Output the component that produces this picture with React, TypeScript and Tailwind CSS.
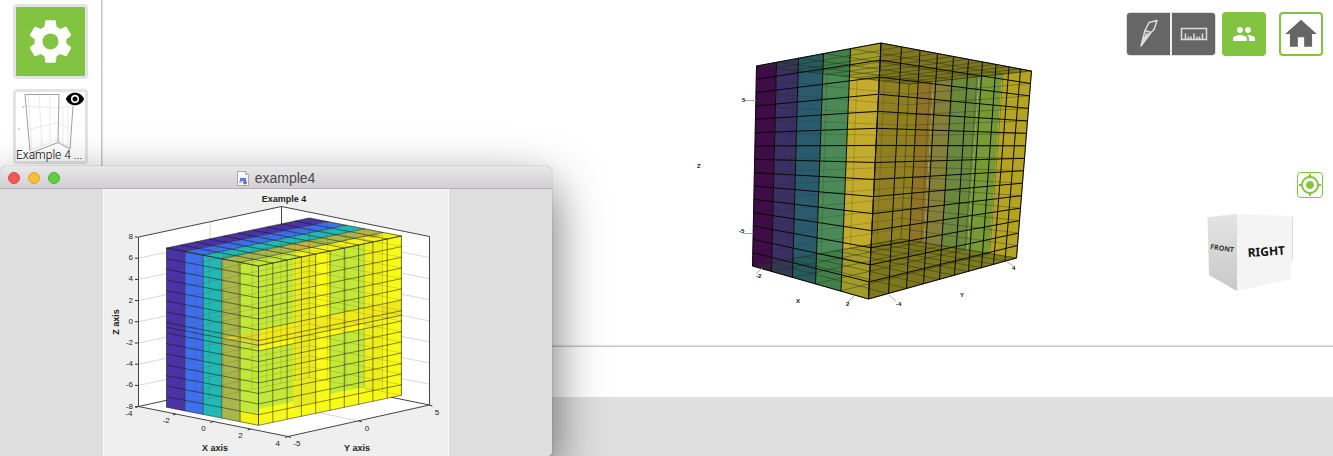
import React from "react";
import { MdGroup, MdHome, MdMyLocation, MdSettings, MdVisibility } from "react-icons/md";

type Point = [number, number];
type Corner = [number, number, number];

const at = (a: Point, b: Point, t: number): Point => [a[0] + (b[0] - a[0]) * t, a[1] + (b[1] - a[1]) * t];

const between = (a: Corner, b: Corner, t: number): Point => {
  const wa = (1 - t) * a[2];
  const wb = t * b[2];
  return [(a[0] * wa + b[0] * wb) / (wa + wb), (a[1] * wa + b[1] * wb) / (wa + wb)];
};

const segment = (a: Point, b: Point) =>
  `M${a[0].toFixed(1)} ${a[1].toFixed(1)}L${b[0].toFixed(1)} ${b[1].toFixed(1)}`;

const quad = (...points: Point[]) => points.map((p) => p.join(",")).join(" ");

/** Lines over a face given by its top and bottom edges. */
function faceGrid(t0: Corner, t1: Corner, b0: Corner, b1: Corner, columns: number, rows: number) {
  let d = "";
  for (let i = 0; i <= columns; i++) d += segment(between(t0, t1, i / columns), between(b0, b1, i / columns));
  for (let j = 0; j <= rows; j++) {
    d += segment(at([t0[0], t0[1]], [b0[0], b0[1]], j / rows), at([t1[0], t1[1]], [b1[0], b1[1]], j / rows));
  }
  return d;
}

function crossGrid(n: Corner, l: Corner, r: Corner, b: Corner) {
  let d = "";
  for (let i = 0; i <= 5; i++) d += segment(between(n, l, i / 5), between(r, b, i / 5));
  for (let i = 0; i <= 10; i++) d += segment(between(n, r, i / 10), between(l, b, i / 10));
  return d;
}

const nearTop: Corner = [881, 43, 3.906];
const leftTop: Corner = [756.5, 66, 5];
const rightTop: Corner = [1031.5, 71, 5.348];
const backTop: Corner = [909, 84, 6.442];
const nearBottom: Corner = [868.5, 299, 3.906];
const leftBottom: Corner = [752.5, 266, 5];
const rightBottom: Corner = [1016.5, 258, 5.348];
const backBottom: Corner = [901, 239, 6.442];

const leftStrips = ["#3f0c47", "#3b3063", "#2a5b6d", "#4b8a56", "#c3ab2c"];
const leftTops = [756.5, 776.5, 798.5, 823.5, 850.5, 881].map((x) => (x - 756.5) / 124.5);
const leftBottoms = [752.5, 771.5, 792.5, 815.5, 841, 868.5].map((x) => (x - 752.5) / 116);
const leftEdge = (i: number): [Point, Point] => [
  at([756.5, 66], [881, 43], leftTops[i]),
  at([752.5, 266], [868.5, 299], leftBottoms[i]),
];

const rightBands: [number, number, string][] = [
  [881, 920, "#908022"],
  [920, 935, "#8f7428"],
  [935, 954, "#84803a"],
  [954, 980, "#6a893d"],
  [980, 1003, "#769a36"],
  [1003, 1031.5, "#b4a421"],
];

const rightTops = [881, 901.5, 920, 937.5, 953.5, 968.5, 982.5, 996, 1009, 1020.5, 1031.5];
const rightBottoms = [868.5, 888.5, 906.5, 923.5, 939.5, 954.5, 968.5, 981.5, 993.5, 1005, 1016.5];

function nearGrid() {
  let d = "";
  for (let i = 0; i <= 5; i++) d += segment(...leftEdge(i));
  rightTops.forEach((x, i) => {
    d += segment(
      at([881, 43], [1031.5, 71], (x - 881) / 150.5),
      at([868.5, 299], [1016.5, 258], (rightBottoms[i] - 868.5) / 148),
    );
  });
  for (let j = 0; j <= 15; j++) {
    const l = at([756.5, 66], [752.5, 266], j / 15);
    const n = at([881, 43], [868.5, 299], j / 15);
    const r = at([1031.5, 71], [1016.5, 258], j / 15);
    d += segment(l, n) + segment(n, r);
  }
  return d;
}

function Scene() {
  const rightAt = (x: number): [Point, Point] => {
    const t = (x - 881) / 150.5;
    return [at([881, 43], [1031.5, 71], t), at([868.5, 299], [1016.5, 258], t)];
  };
  return (
    <svg viewBox="695 0 344 346" className="h-[346px] w-[344px]" role="img" aria-label="3D plot">
      {leftStrips.map((fill, i) => {
        const [a, d] = leftEdge(i);
        const [b, c] = leftEdge(i + 1);
        return <polygon key={fill} points={quad(a, b, c, d)} fill={fill} />;
      })}
      {rightBands.map(([x0, x1, fill]) => {
        const [a, d] = rightAt(x0);
        const [b, c] = rightAt(x1);
        return <polygon key={fill} points={quad(a, b, c, d)} fill={fill} />;
      })}
      <polygon points="756,66 881,43 879,80" fill="#1c5a1e" fillOpacity=".2" />
      <polygon points="881,43 1031,71 909,84 879,80" fill="#7f751f" fillOpacity=".92" />
      <polygon points="752,266 871,244 868,299" fill="#1c5a1e" fillOpacity=".2" />
      <polygon points="871,244 901,239 1016,258 868,299" fill="#7b751c" fillOpacity=".88" />
      <g fill="none" stroke="#1f2a10">
        <path d={faceGrid(leftTop, backTop, leftBottom, backBottom, 5, 15)} strokeOpacity=".2" />
        <path d={faceGrid(backTop, rightTop, backBottom, rightBottom, 5, 15)} strokeOpacity=".34" />
        <path d={crossGrid(nearTop, leftTop, rightTop, backTop)} strokeOpacity=".4" />
        <path d={crossGrid(nearBottom, leftBottom, rightBottom, backBottom)} strokeOpacity=".4" />
      </g>
      <path d={nearGrid()} fill="none" stroke="#080808" />
      <path d="M745 100.5h11M743 233.5h10M756 274l6-6M848 302l6-6M889 295l7 6M1006 261l7 5" stroke="#aaa" fill="none" />
      <g className="font-['Liberation_Sans'] text-[6px] font-bold" fill="#111">
        <text x="697" y="168">Z</text>
        <text x="742" y="102">5</text>
        <text x="739" y="233">-5</text>
        <text x="756" y="278">-2</text>
        <text x="796" y="303">X</text>
        <text x="846" y="306">2</text>
        <text x="896" y="306">-4</text>
        <text x="960" y="297">Y</text>
        <text x="1012" y="270">4</text>
      </g>
    </svg>
  );
}

const levels = [0, 10.6, 21.3, 32, 42.6, 53, 64, 74.7, 79.3, 85, 95.6, 106, 117, 127.5, 138, 148.7, 159.3];
const figureStrips = ["#4a32a9", "#3e70ee", "#22b8b5", "#a7b74b", "#c2e93a"];
const slope = 30 / 143;

/** Patch of the right face between two x positions and two heights below the top edge. */
const facePatch = (x0: number, x1: number, top: number, bottom: number) => {
  const y = (x: number) => 266 - (x - 258.5) * slope;
  return quad([x0, y(x0) + top], [x1, y(x1) + top], [x1, y(x1) + bottom], [x0, y(x0) + bottom]);
};

function Figure() {
  let front = "";
  let ghost = "";
  for (const h of levels) {
    front += `M166.5 ${248 + h}L258.5 ${266 + h}L401.5 ${236 + h}`;
    ghost += `M166.5 ${248 + h}L309 ${218 + h}L401.5 ${236 + h}`;
  }
  for (let i = 0; i <= 10; i++) {
    const x = 258.5 + i * 14.3;
    const y = 266 - i * 3;
    front += `M${x} ${y}v159.3M${x} ${y}l-92 -18`;
    ghost += `M${166.5 + i * 14.3} ${248 - i * 3}v159.3`;
  }
  for (let i = 0; i <= 5; i++) {
    front += `M${166.5 + i * 18.4} ${248 + i * 3.6}v159.3`;
    front += `M${166.5 + i * 18.4} ${248 + i * 3.6}l143 -30`;
    ghost += `M${309 + i * 18.4} ${218 + i * 3.6}v159.3`;
  }
  return (
    <svg viewBox="104 189 344 267" className="h-[267px] w-[344px] bg-[#efefef]" role="img" aria-label="Example 4 figure">
      <path d="M138.5 237L281.5 206.5L429.5 236.5V405L288 436.5L138.5 406.5Z" fill="#fff" />
      <g stroke="#d8d8d8" fill="none">
        {[1, 2, 3, 4, 5, 6, 7].map((i) => (
          <path key={i} d={`M138.5 ${237 + i * 21.2}L281.5 ${206.5 + i * 21.2}L429.5 ${236.5 + i * 21.1}`} />
        ))}
        <path d="M210 222v169L360 421M355 221v169L213 421" />
      </g>
      <path d="M138.5 406.5V237L281.5 206.5L429.5 236.5V405L288 436.5L138.5 406.5L281.5 375L429.5 405M281.5 206.5V375" fill="none" stroke="#444" />
      {figureStrips.map((fill, i) => {
        const x = 166.5 + i * 18.4;
        const y = 248 + i * 3.6;
        return (
          <g key={fill} fill={fill}>
            <path d={`M${x} ${y}l18.4 3.6v159.3l-18.4 -3.6z`} />
            <path d={`M${x} ${y}l143 -30l18.4 3.6l-143 30z`} />
          </g>
        );
      })}
      <path d="M293 252l91 -19l17.5 3l-143 30l35 -7z" fill="#f3f318" />
      <path d="M276 258l18 -4l14 4l-14 3z" fill="#c2e93a" />
      <path d="M293 251l24 -5l-8 -4l-22 5z" fill="#c9b13a" />
      <path d="M365 232l18 3l-10 3l-18 -3z" fill="#c9b13a" />
      <polygon points={facePatch(258.5, 401.5, 0, 159.3)} fill="#fafa18" />
      <polygon points={facePatch(293, 316, 0, 148)} fill="#e9ea20" />
      <polygon points={facePatch(365, 383, 0, 148)} fill="#eeee1e" />
      <polygon points={facePatch(258.5, 293, 0, 64)} fill="#c2e93a" />
      <polygon points={facePatch(258.5, 293, 85, 143)} fill="#c2e93a" />
      <polygon points={facePatch(330, 365, 0, 64)} fill="#c2e93a" />
      <polygon points={facePatch(330, 365, 85, 143)} fill="#c2e93a" />
      <polygon points={facePatch(258.5, 401.5, 64, 80)} fill="#f0ea1c" />
      <path d="M222 338l18.5 -3l18 -4v14l-18.500 -3z" fill="#e3d42c" fillOpacity=".8" />
      <path d="M240.500 410l18 3.500v12l-18 -3.500z" fill="#f3f318" />
      <path d={ghost} fill="none" stroke="#5c4a10" strokeOpacity=".24" strokeWidth=".8" />
      <path d={front} fill="none" stroke="#111" strokeOpacity=".55" strokeWidth=".9" />
      <g className="font-['Liberation_Sans'] text-[8px]" fill="#222">
        {[8, 6, 4, 2, 0, -2, -4, -6, -8].map((v, i) => (
          <g key={v}>
            <text x="133" y={239 + i * 21.2} textAnchor="end">{v}</text>
            <path d={`M135 ${237 + i * 21.2}h3`} stroke="#333" />
          </g>
        ))}
        {[-4, -2, 0, 2, 4].map((v, i) => (
          <g key={v}>
            <text x={129 + i * 37.2} y={416 + i * 7.4} textAnchor="middle">{v}</text>
            <path d={`M${138.5 + i * 37.4} ${406.5 + i * 7.5}l-3 1`} stroke="#333" />
          </g>
        ))}
        {[-5, 0, 5].map((v, i) => (
          <g key={v}>
            <text x={297 + i * 70} y={446 - i * 15.5} textAnchor="middle">{v}</text>
            <path d={`M${288 + i * 70.7} ${436.5 - i * 15.7}l3 1`} stroke="#333" />
          </g>
        ))}
      </g>
      <g className="font-['Liberation_Sans'] text-[9px] font-bold" fill="#222" textAnchor="middle">
        <text x="284" y="202">Example 4</text>
        <text x="215" y="451">X axis</text>
        <text x="357" y="451">Y axis</text>
        <text x="119" y="322" transform="rotate(-90 119 322)">Z axis</text>
      </g>
    </svg>
  );
}

function ViewCube() {
  return (
    <svg viewBox="1205 210 90 84" className="h-[84px] w-[90px]" role="img" aria-label="View cube">
      <defs>
        <linearGradient id="cubeSide" x1="0" y1="0" x2="0" y2="1">
          <stop offset="0" stopColor="#e4e4e4" />
          <stop offset="1" stopColor="#c8c8c8" />
        </linearGradient>
      </defs>
      <path d="M1207.500 217L1237 214V291L1209 275Z" fill="url(#cubeSide)" />
      <path d="M1237 214L1293 216L1291 279L1237 291Z" fill="#f4f4f4" />
      <path d="M1292.500 217v44" stroke="#ddd" />
      <g fontWeight="bold" fill="#111">
        <text x="1210" y="249" fontSize="7" fill="#333" className="font-['Open_Sans']" transform="rotate(8 1210 249)">FRONT</text>
        <text x="1248" y="257" fontSize="12" className="font-['Noto_Sans']" transform="rotate(-4 1248 257)">RIGHT</text>
      </g>
    </svg>
  );
}

function Sidebar() {
  return (
    <aside className="flex w-[102px] shrink-0 flex-col items-center gap-2.5 border-r border-[#c4c4c4] bg-white pt-1 shadow-[1px_0_1px_#e4e4e4]">
      <button aria-label="Settings" className="flex size-[75px] items-center justify-center rounded border-[3px] border-[#e4e4e4] bg-[#82c341] text-white">
        <MdSettings size={53} />
      </button>
      <button aria-label="Example 4" className="relative flex size-[75px] items-end rounded border-[3px] border-[#e4e4e4] bg-white">
        <svg viewBox="0 0 69 69" className="absolute inset-0" fill="none" aria-hidden="true">
          <path d="M12 3l4 54M23 3l3 51M34 3v48M8 14l33 2 14-2M10 38l31-7 13 5M15 58l26-10 14 8M47 14v38M52 15v38" stroke="#ebebeb" />
          <path d="M9 2.500H43L42 50.500M9 2.500L14 59M42 50.500L15 61M42 50.500L54 57M57 14L54 57" stroke="#888" strokeWidth=".8" />
          <path d="M7 14v2M3 36v2" stroke="#aaa" />
        </svg>
        <MdVisibility size={20} className="absolute -top-[3px] right-0 text-black" />
        <span className="relative text-left font-['Roboto'] text-xs leading-3 font-light whitespace-nowrap text-black">Example 4 ...</span>
      </button>
    </aside>
  );
}

function Controls() {
  return (
    <div className="flex w-[207px] shrink-0 flex-col items-end pt-3 pr-2.5">
      <div className="flex w-full items-center">
        <div className="flex gap-0.5 overflow-hidden rounded border border-[#ddd] bg-[#eee]">
          <button aria-label="Slice" className="flex h-[42px] w-[43px] items-center justify-center bg-[#666]">
            <svg viewBox="0 0 24 30" className="h-[30px] w-6" fill="none" stroke="#ddd" strokeWidth="1.500" strokeLinejoin="round" aria-hidden="true">
              <path d="M12 3.500l8-2-3 9-3 3-6-2zM8 11.500L4 27l10-13.500M8 11.500l6 2M10 14L4 27M12 14.500L4 27" />
            </svg>
          </button>
          <button aria-label="Measure" className="flex h-[42px] w-[43px] items-center justify-center bg-[#666]">
            <svg viewBox="0 0 28 14" className="h-3.5 w-7" fill="none" stroke="#ddd" strokeWidth="1.500" aria-hidden="true">
              <path d="M1.500 1.500h25v11h-25zM5.500 12V6.500M8.500 12V9.500M11 12V9.500M14 12V6.500M17 12V9.500M19.500 12V9.500M22.500 12V6.500" />
            </svg>
          </button>
        </div>
        <button aria-label="Users" className="ml-1.5 flex size-11 items-center justify-center rounded-sm bg-[#82c341] text-white">
          <MdGroup size={24} />
        </button>
        <button aria-label="Home" className="ml-auto flex size-11 items-center justify-center rounded-sm border-2 border-[#82c341] bg-white text-[#666]">
          <MdHome size={38} className="shrink-0" />
        </button>
      </div>
      <button aria-label="Center view" className="mt-[116px] flex size-[26px] items-center justify-center rounded border border-[#82c341] bg-white text-[#82c341]">
        <MdMyLocation size={24} className="shrink-0" />
      </button>
      <div className="mt-3 mr-7">
        <ViewCube />
      </div>
    </div>
  );
}

function FigureWindow() {
  return (
    <section className="absolute bottom-0 left-0 w-[552px] rounded-t-md rounded-br bg-[#dedede] shadow-[0_20px_50px_rgba(0,0,0,0.6),0_0_1px_rgba(0,0,0,0.6)]">
      <header className="relative flex h-[23px] items-center justify-center rounded-t-md border-b border-[#b3b1b3] bg-linear-to-b from-[#e9e7e9] to-[#d2d0d2] pt-0.5">
        <div className="absolute left-2 flex gap-2">
          <button aria-label="Close" className="size-3 rounded-full border border-[#dd4a4c] bg-[#f25757]" />
          <button aria-label="Minimize" className="size-3 rounded-full border border-[#dfa32e] bg-[#fbbd3a]" />
          <button aria-label="Zoom" className="size-3 rounded-full border border-[#4cb034] bg-[#62cf43]" />
        </div>
        <svg viewBox="0 0 12 15" className="mr-1.5 h-[15px] w-3" aria-hidden="true">
          <path d="M.5.5h8l3 3v11H.5z" fill="#fafafa" stroke="#aaa" />
          <path d="M8.500.5v3h3" fill="#ddd" stroke="#aaa" />
          <path d="M3 7h6v3H3z" fill="#5a82c8" />
          <path d="M2 10h3v2H2z" fill="#a7b9da" />
          <circle cx="8" cy="11.500" r="2" fill="#777" />
        </svg>
        <h1 className="font-['Liberation_Sans'] text-sm leading-5 text-[#4a4a4a]">example4</h1>
      </header>
      <div className="flex justify-center">
        <div className="shadow-[0_0_0_1px_#fafafa] [clip-path:inset(0_-1px)]">
          <div className="flex"><Figure /></div>
        </div>
      </div>
    </section>
  );
}

export default function App() {
  return (
    <div className="relative flex min-h-screen overflow-hidden bg-white font-['Liberation_Sans',sans-serif]">
      <Sidebar />
      <main className="flex min-w-0 flex-1 flex-col">
        <div className="flex flex-1">
          <div className="flex min-w-0 flex-1 justify-end pr-[87px]">
            <Scene />
          </div>
          <Controls />
        </div>
        <div className="h-[51px] border-t border-[#c4c4c4] shadow-[0_-1px_1px_#e4e4e4]" />
        <footer className="h-[59px] bg-[#dfdfdf]" />
      </main>
      <FigureWindow />
    </div>
  );
}
